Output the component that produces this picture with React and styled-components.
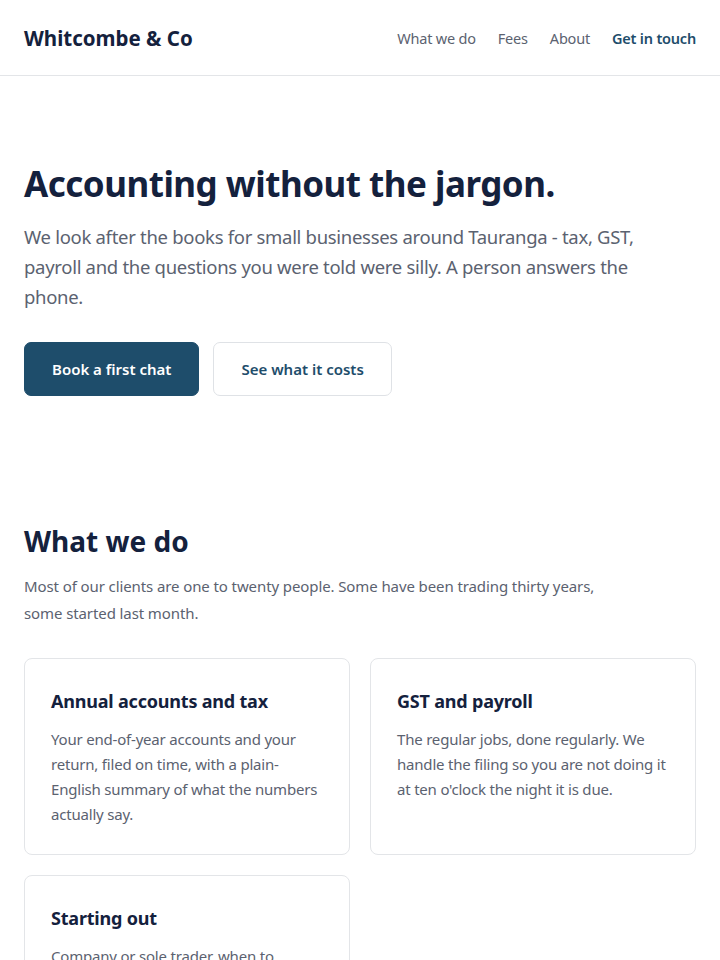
import React from "react";
import styled, { createGlobalStyle } from "styled-components";

const GlobalStyle = createGlobalStyle`
  * { box-sizing: border-box; }
  body {
    margin: 0;
    background: #ffffff;
    font-family: "Noto Sans", "Open Sans", Arial, sans-serif;
    color: #14213d;
  }
  h1, h2, h3, p { margin: 0; }
`;

export default function App() {
  const services = [
    {
      title: "Annual accounts and tax",
      text:
        "Your end-of-year accounts and your return, filed on time, with a plain-English summary of what the numbers actually say.",
    },
    {
      title: "GST and payroll",
      text:
        "The regular jobs, done regularly. We handle the filing so you are not doing it at ten o'clock the night it is due.",
    },
    {
      title: "Starting out",
      text:
        "Company or sole trader, when to register for GST, and what to keep so next year is easy.",
    },
  ];
  return (
    <>
      <GlobalStyle />
      <Header>
        <Logo>Whitcombe &amp; Co</Logo>
        <Nav>
          <NavLink href="#">What we do</NavLink>
          <NavLink href="#">Fees</NavLink>
          <NavLink href="#">About</NavLink>
          <NavLink href="#" $strong>
            Get in touch
          </NavLink>
        </Nav>
      </Header>
      <Hero>
        <HeroTitle>Accounting without the jargon.</HeroTitle>
        <HeroText>
          We look after the books for small businesses around Tauranga - tax,
          GST, payroll and the questions you were told were silly. A person
          answers the phone.
        </HeroText>
        <Actions>
          <Button $primary>Book a first chat</Button>
          <Button>See what it costs</Button>
        </Actions>
      </Hero>
      <Section>
        <SectionTitle>What we do</SectionTitle>
        <SectionText>
          Most of our clients are one to twenty people. Some have been trading
          thirty years, some started last month.
        </SectionText>
        <Cards>
          {services.map((service, index) => (
            <Card key={index}>
              <CardTitle>{service.title}</CardTitle>
              <CardText>{service.text}</CardText>
            </Card>
          ))}
        </Cards>
      </Section>
    </>
  );
}

const Header = styled.header`
  display: flex;
  align-items: center;
  justify-content: space-between;
  height: 76px;
  padding: 0 24px;
  border-bottom: 1px solid #e3e5e8;
`;

const Logo = styled.div`
  font-size: 20.5px;
  font-weight: 700;
  color: #14213d;
`;

const Nav = styled.nav`
  display: flex;
  gap: 22px;
`;

const NavLink = styled.a`
  font-size: 14.5px;
  letter-spacing: -0.2px;
  text-decoration: none;
  color: ${(p) => (p.$strong ? "#1e4d6b" : "#5b6270")};
  font-weight: ${(p) => (p.$strong ? 600 : 400)};
`;

const Hero = styled.section`
  padding: 86px 24px 128px;
`;

const HeroTitle = styled.h1`
  font-size: 35px;
  line-height: 1.25;
  font-weight: 700;
  color: #14213d;
  letter-spacing: -0.5px;
`;

const HeroText = styled.p`
  margin-top: 16px;
  max-width: 640px;
  font-size: 18.5px;
  letter-spacing: -0.3px;
  line-height: 30px;
  color: #5b6270;
`;

const Actions = styled.div`
  display: flex;
  gap: 14px;
  margin-top: 30px;
`;

const Button = styled.button`
  height: 54px;
  padding: 0 27px;
  border-radius: 7px;
  font-family: inherit;
  font-size: 15px;
  font-weight: 600;
  cursor: pointer;
  border: 1px solid ${(p) => (p.$primary ? "#1e4d6b" : "#dfe2e6")};
  background: ${(p) => (p.$primary ? "#1e4d6b" : "#ffffff")};
  color: ${(p) => (p.$primary ? "#ffffff" : "#1e4d6b")};
`;

const Section = styled.section`
  padding: 0 24px 40px;
`;

const SectionTitle = styled.h2`
  font-size: 28px;
  line-height: 1.25;
  font-weight: 700;
  color: #14213d;
`;

const SectionText = styled.p`
  margin-top: 14px;
  max-width: 600px;
  font-size: 15px;
  letter-spacing: -0.1px;
  line-height: 27px;
  color: #5b6270;
`;

const Cards = styled.div`
  display: grid;
  grid-template-columns: repeat(2, 1fr);
  gap: 20px;
  margin-top: 31px;
`;

const Card = styled.div`
  padding: 29px 26px 27px;
  border: 1px solid #e3e5e8;
  border-radius: 8px;
  background: #ffffff;
`;

const CardTitle = styled.h3`
  font-size: 18px;
  letter-spacing: -0.2px;
  line-height: 26px;
  font-weight: 700;
  color: #14213d;
`;

const CardText = styled.p`
  margin-top: 13px;
  font-size: 15px;
  letter-spacing: -0.2px;
  line-height: 25px;
  color: #5b6270;
`;
